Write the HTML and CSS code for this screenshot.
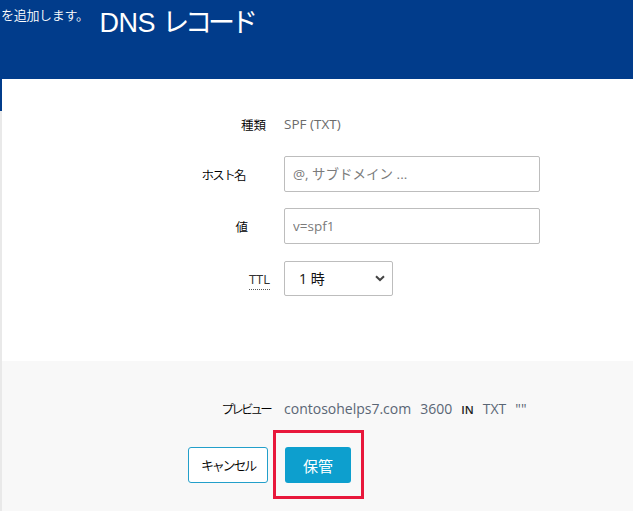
FILE: index.html
```html
<!DOCTYPE html>
<html lang="ja">
<head>
<meta charset="utf-8">
<title>DNS レコード</title>
<link rel="stylesheet" href="styles.css">
</head>
<body>
<header class="header">
  <span class="header-note">を追加します。</span>
  <h1 class="header-title">DNS <span class="title-jp">レコード</span></h1>
</header>
<div class="page">
  <div class="strip"><div class="strip-blue"></div></div>
  <main class="main">
    <section class="form">
      <div class="row row-type">
        <div class="label label-type">種類</div>
        <div class="value">SPF (TXT)</div>
      </div>
      <div class="row">
        <div class="label label-host">ホスト名</div>
        <input class="input" type="text" placeholder="@, サブドメイン ...">
      </div>
      <div class="row">
        <div class="label label-val">値</div>
        <input class="input" type="text" placeholder="v=spf1">
      </div>
      <div class="row">
        <div class="label label-ttl"><abbr class="ttl" title="Time to live">TTL</abbr></div>
        <div class="select">
          <span class="select-text">1 時</span>
          <svg class="chevron" width="10" height="7" viewBox="0 0 10 7"><path d="M1 1.2 L5 5 L9 1.2" fill="none" stroke="#444" stroke-width="2"/></svg>
        </div>
      </div>
    </section>
    <section class="footer">
      <div class="row row-preview">
        <div class="label label-preview">プレビュー</div>
        <div class="preview">contosohelps7.com<span class="sp"></span>3600<span class="sp"></span><span class="in">IN</span><span class="sp"></span>TXT<span class="sp"></span>""</div>
      </div>
      <div class="actions">
        <button class="btn btn-cancel" type="button">キャンセル</button>
        <div class="highlight">
          <button class="btn btn-save" type="button">保管</button>
        </div>
      </div>
    </section>
  </main>
</div>
</body>
</html>
```

FILE: styles.css
```css
html, body {
  margin: 0;
  padding: 0;
  height: 100%;
}
body {
  display: flex;
  flex-direction: column;
  font-family: "Open Sans", "Noto Sans CJK JP", sans-serif;
  font-size: 14px;
  color: #1a1a1a;
  background: #f8f8f8;
}
.header {
  height: 79px;
  flex: none;
  background: #013c8b;
  color: #fff;
  display: flex;
  align-items: flex-start;
}
.header-note {
  font-family: "Noto Sans CJK JP", sans-serif;
  font-size: 13px;
  font-weight: 350;
  line-height: 16px;
  padding: 7px 0 0 1px;
  letter-spacing: -0.3px;
}
.header-title {
  margin: 6px 0 0 11px;
  font-family: "Liberation Sans", "Noto Sans CJK JP", sans-serif;
  font-weight: normal;
  font-size: 27px;
  line-height: 34px;
  letter-spacing: -0.5px;
}
.title-jp {
  letter-spacing: -4px;
}
.page {
  flex: 1;
  display: flex;
}
.strip {
  width: 2px;
  flex: none;
  background: #e9e9e9;
}
.strip-blue {
  height: 32px;
  background: #013c8b;
}
.main {
  flex: 1;
  display: flex;
  flex-direction: column;
}
.form {
  background: #fff;
  padding: 29px 0 65px;
  display: flex;
  flex-direction: column;
  gap: 16px;
}
.footer {
  flex: 1;
  background: #f8f8f8;
  padding-top: 37px;
}
.row {
  display: flex;
  align-items: center;
  height: 36px;
}
.row-type {
  height: 32px;
}
.label {
  width: 282px;
  box-sizing: border-box;
  text-align: right;
  font-family: "Noto Sans CJK JP", sans-serif;
  font-size: 12.5px;
  font-weight: 350;
  color: #000;
  flex: none;
}
.label-type { padding-right: 18px; }
.label-host { padding-right: 39px; letter-spacing: -1.6px; }
.label-val { padding-right: 36px; }
.label-ttl { padding-right: 14px; }
.label-preview { padding-right: 14px; letter-spacing: -2.8px; }
.ttl {
  font-family: "Open Sans", sans-serif;
  font-weight: 400;
  letter-spacing: 0;
  text-decoration: none;
  border-bottom: 1px dotted #555;
  color: #333;
  padding-bottom: 1px;
  font-size: 13px;
}
.value {
  color: #6b6b6b;
  font-size: 13.5px;
}
.input {
  width: 256px;
  height: 36px;
  box-sizing: border-box;
  border: 1px solid #bdbdbd;
  border-radius: 2px;
  padding: 0 8px;
  font-family: "Open Sans", "Noto Sans CJK JP", sans-serif;
  font-size: 13.5px;
  color: #333;
  background: #fff;
  margin: 0;
}
.input::placeholder {
  color: #7b7b7b;
}
.select {
  width: 109px;
  height: 35px;
  box-sizing: border-box;
  border: 1px solid #bdbdbd;
  border-radius: 2px;
  background: #fff;
  display: flex;
  align-items: center;
  justify-content: space-between;
  padding: 0 7px 0 14px;
}
.select-text {
  font-family: "Open Sans", "Noto Sans CJK JP", sans-serif;
  font-size: 14px;
  color: #111;
}
.chevron {
  display: block;
}
.row-preview {
  height: 20px;
}
.preview {
  color: #5a6675;
  font-size: 14px;
  display: flex;
  align-items: center;
}
.sp {
  display: inline-block;
  width: 9px;
}
.in {
  font-size: 11.5px;
  font-weight: 600;
  color: #222;
  padding-top: 2px;
}
.actions {
  display: flex;
  align-items: center;
  margin-top: 12px;
  padding-left: 186px;
  gap: 5px;
}
.btn {
  height: 36px;
  box-sizing: border-box;
  border-radius: 3px;
  font-family: "Noto Sans CJK JP", sans-serif;
  font-size: 13px;
  margin: 0;
  cursor: pointer;
}
.btn-cancel {
  width: 80px;
  background: #fff;
  border: 1px solid #239fca;
  color: #000;
  padding: 0;
  font-weight: 350;
  letter-spacing: -2.2px;
}
.highlight {
  border: 3px solid #e8173b;
  padding: 14px 10px 13px 9px;
}
.btn-save {
  width: 66px;
  background: #0d9fce;
  border: none;
  color: #fff;
  font-size: 15px;
  padding: 0;
}
```
